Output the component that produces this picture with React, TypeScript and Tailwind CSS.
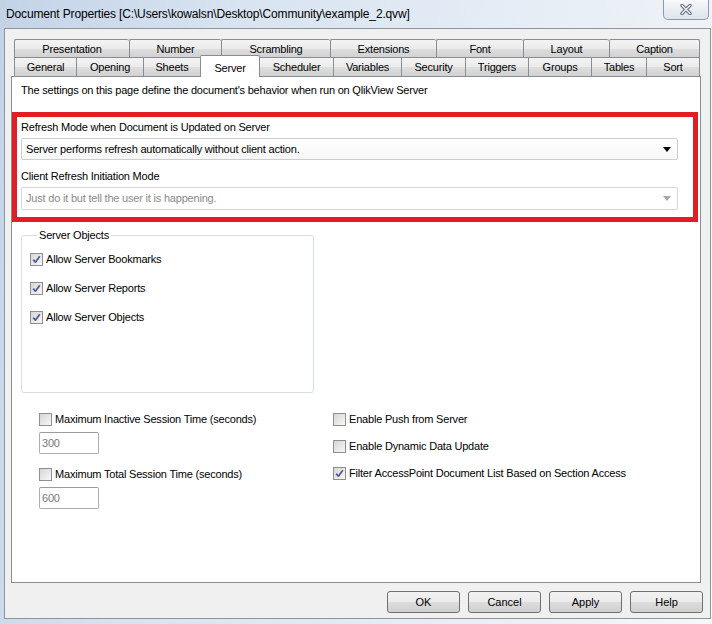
/*
  DocumentProperties: QlikView "Server" tab of the Document Properties dialog
*/

const font = { fontFamily: '"Liberation Sans", Arial, sans-serif' };

const rowOne: [string, number][] = [
  ['Presentation', 115],
  ['Number', 92],
  ['Scrambling', 109],
  ['Extensions', 106],
  ['Font', 87],
  ['Layout', 86],
  ['Caption', 91],
];

const rowTwo: [string, number][] = [
  ['General', 62],
  ['Opening', 67],
  ['Sheets', 57],
  ['Server', 60],
  ['Scheduler', 73],
  ['Variables', 68],
  ['Security', 64],
  ['Triggers', 63],
  ['Groups', 63],
  ['Tables', 55],
  ['Sort', 54],
];

function CheckBox({ checked }: { checked?: boolean }) {
  return (
    <span className="flex h-[13px] w-[13px] shrink-0 items-center justify-center border border-[#8e8f8f] bg-[linear-gradient(135deg,#d6d6d6,#f7f7f7)]">
      {checked && (
        <svg width="11" height="11" viewBox="0 0 11 11">
          <path
            d="M2.2 5.6 L4.4 8.2 L8.8 2.2"
            fill="none"
            stroke="#4b5c93"
            strokeWidth="1.7"
            strokeLinejoin="round"
          />
        </svg>
      )}
    </span>
  );
}

function Check({ label, checked }: { label: string; checked?: boolean }) {
  return (
    <div className="flex h-[13px] items-center gap-[3px] leading-[13px]">
      <CheckBox checked={checked} />
      <span>{label}</span>
    </div>
  );
}

function Combo({ value, disabled }: { value: string; disabled?: boolean }) {
  return (
    <div
      className={`flex items-center justify-between rounded-[2px] border pl-[4px] pr-[6px] ${
        disabled
          ? 'h-[23px] border-[#d6d6d6] bg-white text-[#8a8a8a]'
          : 'h-[22px] border-[#cdcdcd] bg-[linear-gradient(#ffffff,#f7f7f7)] text-black'
      }`}>
      <span>{value}</span>
      <svg width="8" height="5" viewBox="0 0 8 5">
        <path d="M0 0 H8 L4 5 Z" fill={disabled ? '#a8a8a8' : '#000'} />
      </svg>
    </div>
  );
}

function NumBox({ value }: { value: string }) {
  return (
    <div className="mt-[6px] flex h-[22px] w-[60px] items-center rounded-[2px] border border-[#abadb3] border-t-[#9a9ca4] bg-white pl-[2px] text-[#777]">
      {value}
    </div>
  );
}

function Btn({ label }: { label: string }) {
  return (
    <button className="flex h-[22px] w-[73px] items-center justify-center rounded-[3px] border border-[#707070] bg-[linear-gradient(#f2f2f2_0%,#ebebeb_50%,#dddddd_51%,#cfcfcf_100%)] text-black">
      {label}
    </button>
  );
}

export default function App() {
  return (
    <div
      style={font}
      className="flex h-[624px] w-[712px] flex-col overflow-hidden bg-[linear-gradient(100deg,#c3d3e7_0%,#d8e4f1_30%,#e4ecf5_60%,#eef2f7_85%,#f6f8fb_100%)] text-[11px] tracking-[-0.2px] text-black">
      {/* title bar */}
      <div className="flex h-[28px] shrink-0 items-start justify-between">
        <span className="mt-[7px] pl-[6px] text-[12px] leading-[14px] tracking-[-0.15px]">
          Document Properties [C:\Users\kowalsn\Desktop\Community\example_2.qvw]
        </span>
        <div className="mr-[3px] flex h-[20px] w-[46px] items-center justify-center rounded-b-[5px] border border-t-0 border-[#8d9aab] bg-[linear-gradient(#f7f9fb,#dde4ec)]">
          <svg width="12" height="11" viewBox="0 0 12 11">
            <path
              d="M2 1.5 L10 9.5 M10 1.5 L2 9.5"
              stroke="#5f6c7d"
              strokeWidth="3.4"
              strokeLinecap="round"
            />
            <path
              d="M2 1.5 L10 9.5 M10 1.5 L2 9.5"
              stroke="#f1f3f6"
              strokeWidth="1.4"
              strokeLinecap="round"
            />
          </svg>
        </div>
      </div>

      {/* client area */}
      <div className="ml-[4px] flex h-[591px] w-[707px] flex-col border border-[#8f949b] bg-[#f0f0f0] pt-[10px]">
        {/* tabs */}
        <div className="ml-[9px] flex h-[18px]">
          {rowOne.map(([name, w], i) => (
            <div
              key={name}
              style={{ width: w }}
              className={`flex items-center justify-center rounded-t-[2px] border-t border-l border-[#898c95] bg-[linear-gradient(#f3f3f3,#ebebeb_50%,#dedede_51%,#d2d2d2)] pt-[1px] ${
                i === rowOne.length - 1 ? 'border-r' : ''
              }`}>
              {name}
            </div>
          ))}
        </div>
        <div className="ml-[9px] flex h-[19px] items-start">
          {rowTwo.map(([name, w], i) =>
            name === 'Server' ? (
              <div
                key={name}
                style={{ width: w }}
                className="relative z-10 -mt-[2px] flex h-[22px] items-start justify-center rounded-t-[2px] border-x border-t border-[#898c95] bg-white pt-[4px]">
                {name}
              </div>
            ) : (
              <div
                key={name}
                style={{ width: w }}
                className={`flex h-[19px] items-center justify-center border-t border-[#898c95] bg-[linear-gradient(#f3f3f3,#ebebeb_50%,#dedede_51%,#d2d2d2)] pt-[1px] ${
                  rowTwo[i - 1]?.[0] === 'Server' ? '' : 'border-l'
                } ${i === rowTwo.length - 1 ? 'border-r' : ''}`}>
                {name}
              </div>
            )
          )}
        </div>

        {/* tab page */}
        <div className="ml-[6px] flex h-[507px] w-[690px] flex-col border border-[#898c95] bg-white">
          <p className="ml-[9px] mt-[7px] leading-[13px]">
            The settings on this page define the document's behavior when run
            on QlikView Server
          </p>

          <div className="mr-[2px] mt-[15px] border-[5px] border-[#e41d25] pb-[7px] pl-[4px] pr-[15px] pt-[4px]">
            <p className="leading-[13px]">
              Refresh Mode when Document is Updated on Server
            </p>
            <div className="mt-[4px]">
              <Combo value="Server performs refresh automatically without client action." />
            </div>
            <p className="mt-[10px] leading-[13px]">
              Client Refresh Initiation Mode
            </p>
            <div className="mt-[4px]">
              <Combo
                value="Just do it but tell the user it is happening."
                disabled
              />
            </div>
          </div>

          <fieldset className="ml-[9px] mt-[7px] h-[164px] w-[293px] rounded-[3px] border border-[#d5dfe5] pl-[8px]">
            <legend className="ml-[7px] px-[2px] leading-[13px]">
              Server Objects
            </legend>
            <div className="mt-[11px] flex flex-col gap-[16px]">
              <Check label="Allow Server Bookmarks" checked />
              <Check label="Allow Server Reports" checked />
              <Check label="Allow Server Objects" checked />
            </div>
          </fieldset>

          <div className="ml-[27px] mt-[20px] grid grid-cols-[294px_1fr]">
            <div className="flex flex-col">
              <Check label="Maximum Inactive Session Time (seconds)" />
              <NumBox value="300" />
              <div className="mt-[14px]">
                <Check label="Maximum Total Session Time (seconds)" />
              </div>
              <NumBox value="600" />
            </div>
            <div className="flex flex-col gap-[14px]">
              <Check label="Enable Push from Server" />
              <Check label="Enable Dynamic Data Update" />
              <Check
                label="Filter AccessPoint Document List Based on Section Access"
                checked
              />
            </div>
          </div>
        </div>

        {/* buttons */}
        <div className="mt-[8px] flex justify-end gap-[8px] pr-[7px] tracking-normal">
          <Btn label="OK" />
          <Btn label="Cancel" />
          <Btn label="Apply" />
          <Btn label="Help" />
        </div>
      </div>
    </div>
  );
}
